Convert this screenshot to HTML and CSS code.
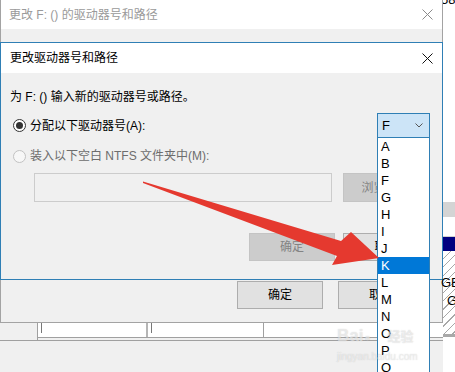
FILE: index.html
```html
<!DOCTYPE html>
<html lang="zh-CN">
<head>
<meta charset="utf-8">
<title>更改驱动器号和路径</title>
<link rel="stylesheet" href="styles.css">
</head>
<body>
<div class="screen">
  <div class="main">
    <div class="outer">
      <div class="otitle">
        <span>更改 F: () 的驱动器号和路径</span>
        <svg class="xicon" width="11" height="11" viewBox="0 0 11 11"><path d="M0.5 0.5L10.5 10.5M10.5 0.5L0.5 10.5" stroke="#8a8a8a" stroke-width="1" fill="none"/></svg>
      </div>
      <div class="ogap"></div>
      <div class="inner">
        <div class="ititle">
          <span>更改驱动器号和路径</span>
          <svg class="xicon" width="11" height="11" viewBox="0 0 11 11"><path d="M0.5 0.5L10.5 10.5M10.5 0.5L0.5 10.5" stroke="#111" stroke-width="1" fill="none"/></svg>
        </div>
        <div class="ibody">
          <div class="prompt">为 F: () 输入新的驱动器号或路径。</div>
          <div class="row r1">
            <span class="radio on"><span class="dot"></span></span>
            <span class="lbl">分配以下驱动器号(A):</span>
            <div class="combo">
              <span>F</span>
              <svg width="8" height="5" viewBox="0 0 8 5"><path d="M0.5 0.5L4 4L7.5 0.5" stroke="#555" stroke-width="1" fill="none"/></svg>
            </div>
          </div>
          <div class="row r2">
            <span class="radio off"></span>
            <span class="lbl dis">装入以下空白 NTFS 文件夹中(M):</span>
          </div>
          <div class="row r3">
            <div class="path"></div>
            <div class="btn disabled browse">浏览(B)...</div>
          </div>
          <div class="row r4">
            <div class="btn disabled ok">确定</div>
            <div class="btn cancel">取消</div>
          </div>
        </div>
      </div>
      <div class="obtns">
        <div class="btn ok">确定</div>
        <div class="btn ok">取消</div>
      </div>
    </div>
    <div class="listrow">
      <div class="lcell0"></div>
      <div class="lgroup">
        <div class="lcells">
          <div class="lc c1"><span class="tick"></span></div>
          <div class="lc c2"><span class="tick"></span></div>
          <div class="lc c3"></div>
        </div>
        <div class="lline"></div>
        <div class="lgap"></div>
        <div class="lline"></div>
      </div>
    </div>
  </div>
  <div class="strip">
    <div class="s-top"><span>58</span></div>
    <div class="s-gray"></div>
    <div class="s-white"></div>
    <div class="s-navy"></div>
    <div class="s-hatch"><div class="gb">GB</div><div class="g">G</div></div>
    <div class="s-bar"></div>
  </div>

  <ul class="dropdown">
    <li>A</li><li>B</li><li>F</li><li>G</li><li>H</li><li>I</li><li>J</li>
    <li class="sel">K</li><li>L</li><li>M</li><li>N</li><li>O</li><li>P</li><li>Q</li>
  </ul>

  <svg class="arrow" width="455" height="372" viewBox="0 0 455 372">
    <polygon points="143,181.5 341,241 351,232 379,258 332,265 337,256 143,183" fill="#e5392f"/>
  </svg>

  <div class="watermark">
    <div class="wm1">Bai<span class="paw">●</span><span class="jy">经验</span></div>
    <div class="wm2">jingyan.baidu.com</div>
  </div>
</div>
</body>
</html>
```

FILE: styles.css
```css
* { box-sizing: border-box; }
html, body { margin: 0; padding: 0; }
body {
  width: 455px;
  height: 372px;
  overflow: hidden;
  background: #f0f0f0;
  font-family: "Liberation Sans", "Noto Sans CJK SC", sans-serif;
  font-size: 12px;
  line-height: 16px;
  color: #000;
}
.screen {
  position: relative;
  width: 455px;
  height: 372px;
  display: flex;
}
.main {
  width: 443px;
  display: flex;
  flex-direction: column;
}
.outer {
  height: 323px;
  border-left: 1px solid #a3a3a3;
  border-right: 1px solid #a3a3a3;
  border-bottom: 1px solid #a3a3a3;
  background: #f0f0f0;
  display: flex;
  flex-direction: column;
}
.otitle {
  height: 29px;
  background: #fff;
  display: flex;
  align-items: center;
  justify-content: space-between;
  padding: 0 9px 0 8px;
  color: #9a9a9a;
}
.xicon { display: block; }
.ogap { height: 13px; }
.inner {
  margin: 0 -1px;
  height: 238px;
  border: 1px solid #2f7fb5;
  display: flex;
  flex-direction: column;
  background: #f0f0f0;
}
.ititle {
  height: 30px;
  background: #fff;
  display: flex;
  align-items: center;
  justify-content: space-between;
  padding: 0 9px;
}
.ibody {
  flex: 1;
  padding: 16px 12px 0 9px;
}
.prompt { height: 16px; }
.row { display: flex; align-items: center; }
.r1 { margin-top: 8px; height: 25px; }
.r2 { margin-top: 10px; height: 16px; }
.r3 { margin-top: 9px; height: 29px; align-items: stretch; }
.r4 { margin-top: 31px; height: 28px; justify-content: flex-end; gap: 8px; align-items: stretch; }
.radio {
  width: 13px;
  height: 13px;
  margin-left: 3px;
  border-radius: 50%;
  display: flex;
  align-items: center;
  justify-content: center;
  flex: none;
}
.radio.on { border: 1px solid #333; background: #fff; }
.radio.on .dot { width: 7px; height: 7px; border-radius: 50%; background: #333; }
.radio.off { border: 1px solid #c2c2c2; background: #f7f7f7; }
.lbl { margin-left: 4px; }
.lbl.dis { color: #6d6d6d; }
.combo {
  margin-left: auto;
  width: 53px;
  height: 25px;
  border: 1px solid #2f7fb5;
  background: #cce4f7;
  display: flex;
  align-items: center;
  justify-content: space-between;
  padding: 0 6px 0 4px;
  font-size: 13px;
}
.combo svg { display: block; }
.path {
  margin-left: 24px;
  width: 298px;
  border: 1px solid #cccccc;
  background: #f0f0f0;
}
.btn {
  display: flex;
  align-items: center;
  justify-content: center;
  border: 1px solid #adadad;
  background: #e1e1e1;
}
.btn.disabled {
  background: #cccccc;
  border-color: #c4c4c4;
  color: #838383;
}
.browse { margin-left: 11px; flex: 1; }
.r4 .ok { width: 86px; }
.r4 .cancel { width: 87px; }
.obtns {
  margin-top: 1px;
  height: 28px;
  display: flex;
  justify-content: flex-end;
  gap: 15px;
  padding-right: 18px;
}
.obtns .ok { width: 86px; }

.listrow {
  height: 18px;
  display: flex;
}
.lcell0 {
  width: 37px;
  border-bottom: 1px solid #a0a0a0;
}
.lgroup {
  flex: 1;
  border-left: 1px solid #a0a0a0;
  display: flex;
  flex-direction: column;
}
.lcells { height: 14px; display: flex; background: #fff; }
.lc { height: 14px; }
.c1 { width: 110px; border-right: 2px solid #b5b5b5; }
.c2 { width: 116px; border-right: 1px solid #a0a0a0; }
.c3 { flex: 1; }
.tick {
  display: block;
  width: 1px;
  height: 10px;
  margin-left: 3px;
  background: #777;
}
.lline { height: 1px; background: #a0a0a0; }
.lgap { height: 2px; }

.strip {
  width: 12px;
  display: flex;
  flex-direction: column;
  background: #fff;
}
.s-top { height: 202px; overflow: hidden; font-size: 13px; }
.s-top span { display: block; margin-top: -8px; margin-left: -2px; }
.s-gray { height: 15px; background: #d4d4d4; }
.s-white { height: 20px; background: #fff; border-top: 10px solid #fff; border-bottom: 1px solid #d0d0d0; }
.s-navy { height: 14px; background: #000080; }
.s-hatch {
  height: 83px;
  background: repeating-linear-gradient(135deg, #ffffff 0 5px, #a8a8a8 5px 6px);
  font-size: 13px;
  padding-top: 24px;
}
.gb { margin-left: -2px; height: 18px; }
.g { margin-left: 4px; }
.s-bar { height: 3px; background: #a8a8a8; }

.dropdown {
  position: absolute;
  left: 377px;
  top: 138px;
  width: 53px;
  height: 240px;
  margin: 0;
  padding: 0;
  list-style: none;
  background: #fff;
  border-left: 1px solid #2f7fb5;
  border-right: 1px solid #2f7fb5;
  font-family: "Liberation Sans", sans-serif;
  font-size: 13px;
}
.dropdown li {
  height: 17px;
  line-height: 17px;
  padding-left: 3px;
}
.dropdown li.sel { background: #0078d7; color: #fff; }

.arrow {
  position: absolute;
  left: 0;
  top: 0;
  pointer-events: none;
}
.watermark {
  position: absolute;
  left: 337px;
  top: 326px;
  color: rgba(255, 255, 255, 0.55);
  text-shadow: 0 0 1px rgba(110, 110, 110, 0.35);
  pointer-events: none;
}
.wm1 { font-size: 17px; font-weight: bold; line-height: 20px; }
.paw { font-size: 10px; margin: 0 1px; }
.jy { font-size: 13px; margin-left: 16px; }
.wm2 { font-size: 10px; line-height: 14px; margin-top: 2px; }
```
